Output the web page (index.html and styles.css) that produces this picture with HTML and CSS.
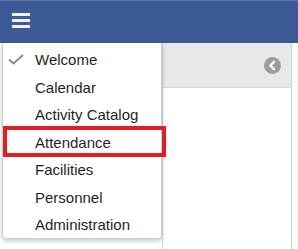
FILE: index.html
```html
<!DOCTYPE html>
<html>
<head>
    <title>Menu</title>
    <link rel="stylesheet" href="styles.css">
</head>
<body>
    <div class="topbar">
        <button class="menu-btn" aria-label="Menu">
            <svg width="18" height="15" viewBox="0 0 18 15">
                <rect x="0" y="0" width="18" height="3" fill="#eef1f7"/>
                <rect x="0" y="6" width="18" height="3" fill="#eef1f7"/>
                <rect x="0" y="12" width="18" height="3" fill="#eef1f7"/>
            </svg>
        </button>
    </div>

    <div class="page">
        <div class="left-space"></div>
        <div class="panel">
            <div class="panel-head">
                <span class="back-btn">
                    <svg width="17" height="17" viewBox="0 0 17 17">
                        <circle cx="8.5" cy="8.5" r="8.5" fill="#9c9c9c"/>
                        <polyline points="10,4.8 6.3,8.5 10,12.2" fill="none" stroke="#fff" stroke-width="2.4" stroke-linecap="round" stroke-linejoin="round"/>
                    </svg>
                </span>
            </div>
        </div>
        <div class="right-space"></div>
    </div>

    <!-- 드롭다운 메뉴 -->
    <ul class="dropdown">
        <li class="item checked">
            <svg class="check" width="16" height="11" viewBox="0 0 16 11">
                <polyline points="1,5.5 5.5,9.5 15,1" fill="none" stroke="#8a8a8a" stroke-width="2"/>
            </svg>
            Welcome
        </li>
        <li class="item">Calendar</li>
        <li class="item">Activity Catalog</li>
        <li class="item">Attendance</li>
        <li class="item">Facilities</li>
        <li class="item">Personnel</li>
        <li class="item">Administration</li>
    </ul>

    <div class="highlight"></div>
</body>
</html>
```

FILE: styles.css
```css
body {
    margin: 0;
    padding: 0;
    font-family: "Liberation Sans", Arial, sans-serif;
    background-color: #ffffff;
    height: 249px;
    overflow: hidden;
    display: flex;
    flex-direction: column;
}

.topbar {
    height: 43px;
    background-color: #3c5a95;
    border-top: 1px solid #5674ab;
    box-sizing: border-box;
    display: flex;
    align-items: center;
    flex-shrink: 0;
}

.menu-btn {
    border: none;
    background: none;
    padding: 0;
    margin-left: 12px;
    margin-top: -3px;
    display: flex;
}

.page {
    flex: 1;
    display: grid;
    grid-template-columns: 162px 130px 1fr;
}

.panel {
    border-left: 1px solid #d6d6d8;
    border-right: 1px solid #d2d2d4;
}

.panel-head {
    height: 45px;
    background-color: #e8e8eb;
    border-bottom: 1px solid #d8d8da;
    box-sizing: border-box;
    display: flex;
    align-items: center;
    justify-content: flex-end;
    padding-right: 10px;
    padding-top: 1px;
}

.back-btn {
    display: flex;
}

.right-space {
    background-color: #fbfbfb;
}

.dropdown {
    position: absolute;
    top: 43px;
    left: 2px;
    width: 160px;
    margin: 0;
    padding: 3px 0 0 0;
    list-style: none;
    background-color: #ffffff;
    border: 1px solid #cfcfcf;
    border-top: none;
    border-radius: 0 0 4px 4px;
    box-shadow: 0 2px 4px rgba(0, 0, 0, 0.22);
    box-sizing: border-box;
    height: 196px;
}

.item {
    position: relative;
    height: 27.5px;
    line-height: 27.5px;
    padding-left: 32px;
    font-size: 15px;
    color: #1f1f1f;
}

.check {
    position: absolute;
    left: 5px;
    top: 8px;
}

.highlight {
    position: absolute;
    top: 126px;
    left: 3px;
    width: 163px;
    height: 31px;
    border: 4px solid #e01e26;
    box-sizing: border-box;
}
```
